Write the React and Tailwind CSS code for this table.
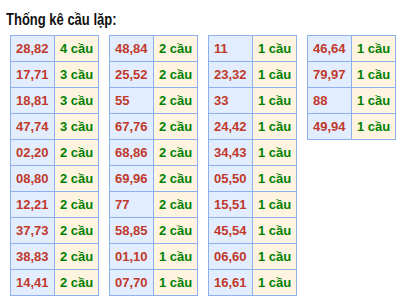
import React from "react";

const tables = [
  [
    ["28,82", "4 cầu"],
    ["17,71", "3 cầu"],
    ["18,81", "3 cầu"],
    ["47,74", "3 cầu"],
    ["02,20", "2 cầu"],
    ["08,80", "2 cầu"],
    ["12,21", "2 cầu"],
    ["37,73", "2 cầu"],
    ["38,83", "2 cầu"],
    ["14,41", "2 cầu"],
  ],
  [
    ["48,84", "2 cầu"],
    ["25,52", "2 cầu"],
    ["55", "2 cầu"],
    ["67,76", "2 cầu"],
    ["68,86", "2 cầu"],
    ["69,96", "2 cầu"],
    ["77", "2 cầu"],
    ["58,85", "2 cầu"],
    ["01,10", "1 cầu"],
    ["07,70", "1 cầu"],
  ],
  [
    ["11", "1 cầu"],
    ["23,32", "1 cầu"],
    ["33", "1 cầu"],
    ["24,42", "1 cầu"],
    ["34,43", "1 cầu"],
    ["05,50", "1 cầu"],
    ["15,51", "1 cầu"],
    ["45,54", "1 cầu"],
    ["06,60", "1 cầu"],
    ["16,61", "1 cầu"],
  ],
  [
    ["46,64", "1 cầu"],
    ["79,97", "1 cầu"],
    ["88", "1 cầu"],
    ["49,94", "1 cầu"],
  ],
];

export default function App() {
  return (
    <div className="w-[403px] h-[300px] bg-white font-['Liberation_Sans',Arial,sans-serif] overflow-hidden">
      <div className="pl-[6px] pt-[9px] h-[35px]">
        <span className="inline-block origin-bottom scale-y-[1.2] text-[13px] font-bold leading-[15px] text-[#111]">Thống kê cầu lặp:</span>
      </div>
      <div className="flex items-start pl-[10px] gap-[10px]">
        {tables.map((rows, t) => (
          <table key={t} className="border-collapse border border-[#8fb0f0] text-[13px] font-bold">
            <tbody>
              {rows.map(([num, count], i) => (
                <tr key={i} className="h-[26px]">
                  <td className="w-[44px] border border-[#8fb0f0] bg-[#e2eeff] pl-[5px] text-[#c0392b]">{num}</td>
                  <td className="w-[44px] border border-[#8fb0f0] bg-[#fff4e0] pl-[5px] text-[#008000]">{count}</td>
                </tr>
              ))}
            </tbody>
          </table>
        ))}
      </div>
    </div>
  );
}
